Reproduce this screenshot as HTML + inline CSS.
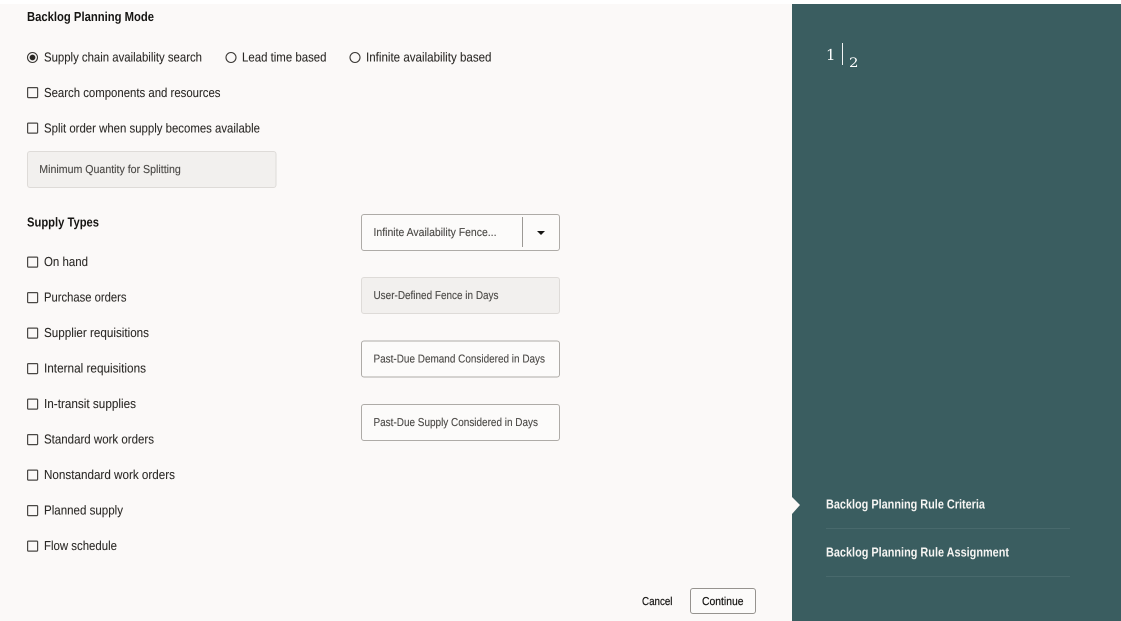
<!DOCTYPE html>
<html lang="en">
<head>
<meta charset="utf-8">
<title>Backlog Planning Rule</title>
<style>
html,body{margin:0;padding:0;background:#fff;width:1121px;height:621px;overflow:hidden}
svg{display:block;position:absolute;left:0;top:0}
text{font-family:"Liberation Sans",sans-serif;text-rendering:geometricPrecision}
.l{font-size:13px;fill:#2b2926;stroke:#2b2926;stroke-width:.08px}
.b{font-size:13px;font-weight:bold;fill:#161513}
.f{font-size:11.500px;fill:#4b4946;stroke:#4b4946;stroke-width:.12px}
.w{font-size:13px;fill:#f6f5f3;font-weight:bold}
.a{font-size:11.500px;fill:#161513;stroke:#161513;stroke-width:.2px}
.cb{fill:#fbf9f8;stroke:#4a4845;stroke-width:1.2}
</style>
</head>
<body>
<svg width="1121" height="621" viewBox="0 0 1121 621" xmlns="http://www.w3.org/2000/svg">
<rect x="0" y="4" width="792" height="617" fill="#fbf9f8"/>
<rect x="792" y="4" width="329" height="617" fill="#3a5d60"/>

<text class="b" x="27" y="21" textLength="127" lengthAdjust="spacingAndGlyphs">Backlog Planning Mode</text>

<circle cx="32.500" cy="57.500" r="5" fill="#fbf9f8" stroke="#3a3835" stroke-width="1.100"/>
<circle cx="32.500" cy="57.500" r="2.900" fill="#2b2926"/>
<text class="l" x="44" y="61.500" textLength="158" lengthAdjust="spacingAndGlyphs">Supply chain availability search</text>
<circle cx="231" cy="57.500" r="5" fill="#fbf9f8" stroke="#3a3835" stroke-width="1.100"/>
<text class="l" x="242" y="61.500" textLength="84.500" lengthAdjust="spacingAndGlyphs">Lead time based</text>
<circle cx="355" cy="57.500" r="5" fill="#fbf9f8" stroke="#3a3835" stroke-width="1.100"/>
<text class="l" x="366" y="61.500" textLength="125.500" lengthAdjust="spacingAndGlyphs">Infinite availability based</text>

<rect class="cb" x="27.600" y="87.600" width="10" height="10" rx=".8"/>
<text class="l" x="44" y="97" textLength="176.500" lengthAdjust="spacingAndGlyphs">Search components and resources</text>
<rect class="cb" x="27.600" y="123.100" width="10" height="10" rx=".8"/>
<text class="l" x="44" y="132.500" textLength="216" lengthAdjust="spacingAndGlyphs">Split order when supply becomes available</text>

<rect x="27.500" y="151.500" width="248.500" height="36" rx="2.500" fill="#f2f0ee" stroke="#dedbd8"/>
<text class="f" x="39.300" y="173" textLength="141.500" lengthAdjust="spacingAndGlyphs">Minimum Quantity for Splitting</text>

<text class="b" x="27" y="226.500" textLength="72" lengthAdjust="spacingAndGlyphs">Supply Types</text>

<rect class="cb" x="27.600" y="257.100" width="10" height="10" rx=".8"/>
<text class="l" x="44" y="266" textLength="44" lengthAdjust="spacingAndGlyphs">On hand</text>
<rect class="cb" x="27.600" y="292.600" width="10" height="10" rx=".8"/>
<text class="l" x="44" y="301.500" textLength="82.500" lengthAdjust="spacingAndGlyphs">Purchase orders</text>
<rect class="cb" x="27.600" y="328.100" width="10" height="10" rx=".8"/>
<text class="l" x="44" y="337" textLength="105" lengthAdjust="spacingAndGlyphs">Supplier requisitions</text>
<rect class="cb" x="27.600" y="363.600" width="10" height="10" rx=".8"/>
<text class="l" x="44" y="372.500" textLength="102" lengthAdjust="spacingAndGlyphs">Internal requisitions</text>
<rect class="cb" x="27.600" y="399.100" width="10" height="10" rx=".8"/>
<text class="l" x="44" y="408" textLength="92" lengthAdjust="spacingAndGlyphs">In-transit supplies</text>
<rect class="cb" x="27.600" y="434.600" width="10" height="10" rx=".8"/>
<text class="l" x="44" y="443.500" textLength="110" lengthAdjust="spacingAndGlyphs">Standard work orders</text>
<rect class="cb" x="27.600" y="470.100" width="10" height="10" rx=".8"/>
<text class="l" x="44" y="479" textLength="131" lengthAdjust="spacingAndGlyphs">Nonstandard work orders</text>
<rect class="cb" x="27.600" y="505.600" width="10" height="10" rx=".8"/>
<text class="l" x="44" y="514.500" textLength="79" lengthAdjust="spacingAndGlyphs">Planned supply</text>
<rect class="cb" x="27.600" y="541.100" width="10" height="10" rx=".8"/>
<text class="l" x="44" y="550" textLength="73" lengthAdjust="spacingAndGlyphs">Flow schedule</text>

<rect x="361.500" y="214.500" width="198" height="36" rx="2.500" fill="#fcfbfa" stroke="#aeaba7"/>
<text class="f" x="373.500" y="236" textLength="123" lengthAdjust="spacingAndGlyphs">Infinite Availability Fence...</text>
<rect x="522" y="217" width="1" height="30" fill="#9c9995"/>
<path d="M537 231 H545 L541 235 Z" fill="#161513"/>

<rect x="361.500" y="277.500" width="198" height="36" rx="2.500" fill="#f2f0ee" stroke="#dedbd8"/>
<text class="f" x="373.500" y="299" textLength="125" lengthAdjust="spacingAndGlyphs">User-Defined Fence in Days</text>

<rect x="361.500" y="341" width="198" height="36" rx="2.500" fill="#fcfbfa" stroke="#aeaba7"/>
<text class="f" x="373.500" y="362.500" textLength="171.500" lengthAdjust="spacingAndGlyphs">Past-Due Demand Considered in Days</text>

<rect x="361.500" y="404.500" width="198" height="36" rx="2.500" fill="#fcfbfa" stroke="#aeaba7"/>
<text class="f" x="373.500" y="426" textLength="164.500" lengthAdjust="spacingAndGlyphs">Past-Due Supply Considered in Days</text>

<text class="a" x="642" y="605" textLength="30.500" lengthAdjust="spacingAndGlyphs">Cancel</text>
<rect x="690.500" y="588.500" width="65" height="25" rx="2.500" fill="#fcfbfa" stroke="#96938f"/>
<text class="a" x="702" y="605" textLength="41.500" lengthAdjust="spacingAndGlyphs">Continue</text>

<text x="826" y="60" textLength="9.500" lengthAdjust="spacingAndGlyphs" style="font-family:'DejaVu Serif',serif;font-size:15px;fill:#fff">1</text>
<rect x="842" y="43" width="1" height="22" fill="#f2f4f4"/>
<text x="849" y="67" textLength="9.500" lengthAdjust="spacingAndGlyphs" style="font-family:'DejaVu Serif',serif;font-size:13px;fill:#fff">2</text>

<path d="M792 497 L800 505 L792 514 Z" fill="#fbf9f8"/>
<text class="w" x="826" y="508.500" textLength="159" lengthAdjust="spacingAndGlyphs">Backlog Planning Rule Criteria</text>
<rect x="826" y="528" width="244" height="1" fill="#48696c"/>
<text class="w" x="826" y="556.500" textLength="183" lengthAdjust="spacingAndGlyphs">Backlog Planning Rule Assignment</text>
<rect x="826" y="576" width="244" height="1" fill="#48696c"/>
</svg>
</body>
</html>
